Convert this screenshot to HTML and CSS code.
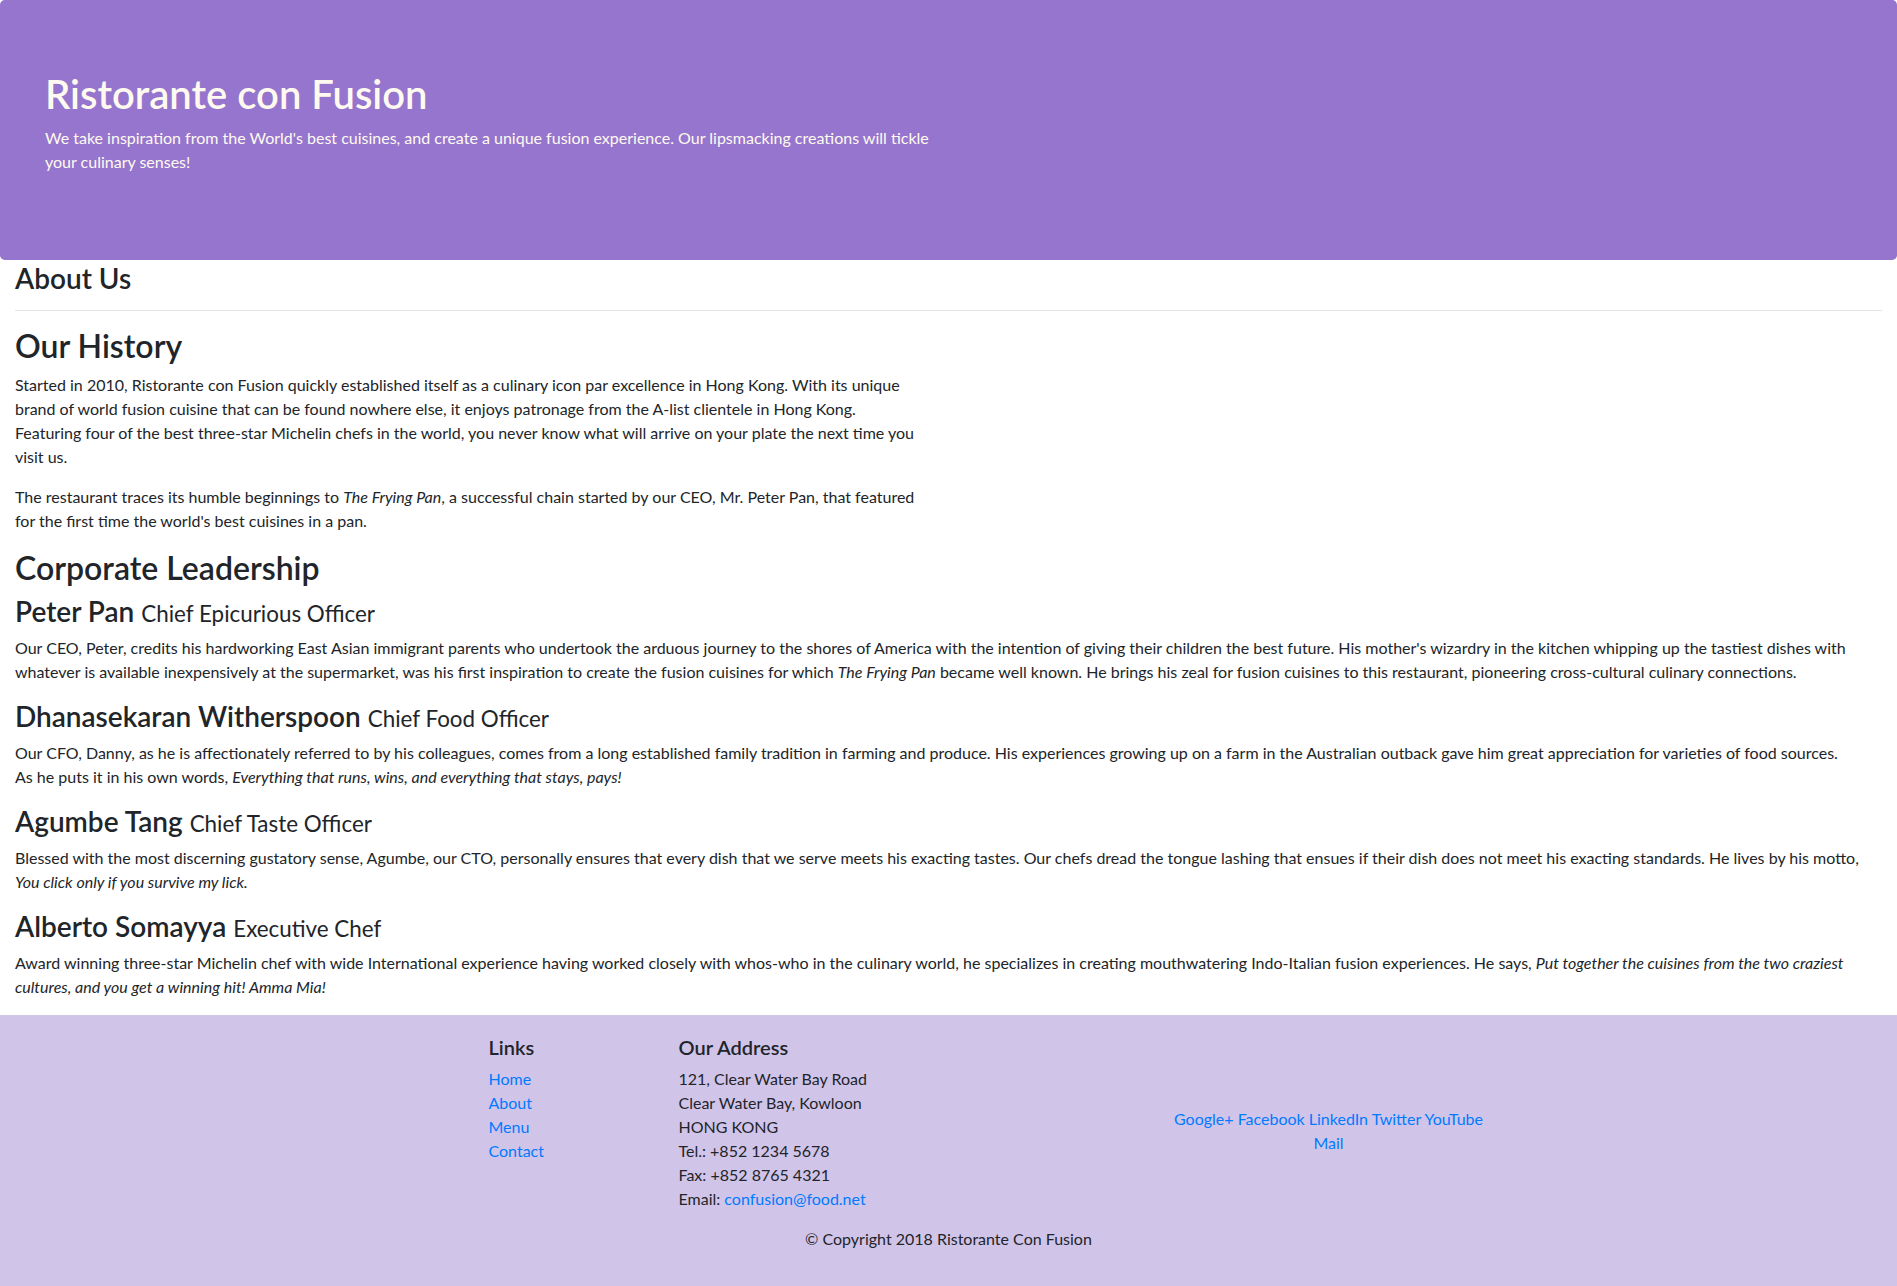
FILE: index.html
```html
<!DOCTYPE html>
<html lang="en">
<head>
<meta charset="utf-8">
<title>Ristorante con Fusion: About Us</title>
<link rel="stylesheet" href="styles.css">
</head>
<body>
<header class="jumbotron">
  <div class="jumbotron-inner">
    <div class="jumbotron-text">
      <h1>Ristorante con Fusion</h1>
      <p>We take inspiration from the World's best cuisines, and create a unique fusion experience. Our lipsmacking creations will tickle<br>your culinary senses!</p>
    </div>
  </div>
</header>

<main class="page">
  <section class="page-title">
    <h3>About Us</h3>
    <hr>
  </section>

  <section class="history">
    <h2>Our History</h2>
    <p>Started in 2010, Ristorante con Fusion quickly established itself as a culinary icon par excellence in Hong Kong. With its unique<br>brand of world fusion cuisine that can be found nowhere else, it enjoys patronage from the A-list clientele in Hong Kong.<br>Featuring four of the best three-star Michelin chefs in the world, you never know what will arrive on your plate the next time you<br>visit us.</p>
    <p>The restaurant traces its humble beginnings to <em>The Frying Pan</em>, a successful chain started by our CEO, Mr. Peter Pan, that featured<br>for the first time the world's best cuisines in a pan.</p>
  </section>

  <section class="leadership">
    <h2>Corporate Leadership</h2>
    <article class="leader">
      <h3 class="leader-name">Peter Pan <small>Chief Epicurious Officer</small></h3>
      <p>Our CEO, Peter, credits his hardworking East Asian immigrant parents who undertook the arduous journey to the shores of America with the intention of giving their children the best future. His mother's wizardry in the kitchen whipping up the tastiest dishes with<br>whatever is available inexpensively at the supermarket, was his first inspiration to create the fusion cuisines for which <em>The Frying Pan</em> became well known. He brings his zeal for fusion cuisines to this restaurant, pioneering cross-cultural culinary connections.</p>
    </article>
    <article class="leader">
      <h3 class="leader-name">Dhanasekaran Witherspoon <small>Chief Food Officer</small></h3>
      <p>Our CFO, Danny, as he is affectionately referred to by his colleagues, comes from a long established family tradition in farming and produce. His experiences growing up on a farm in the Australian outback gave him great appreciation for varieties of food sources.<br>As he puts it in his own words, <em>Everything that runs, wins, and everything that stays, pays!</em></p>
    </article>
    <article class="leader">
      <h3 class="leader-name">Agumbe Tang <small>Chief Taste Officer</small></h3>
      <p>Blessed with the most discerning gustatory sense, Agumbe, our CTO, personally ensures that every dish that we serve meets his exacting tastes. Our chefs dread the tongue lashing that ensues if their dish does not meet his exacting standards. He lives by his motto,<br><em>You click only if you survive my lick.</em></p>
    </article>
    <article class="leader">
      <h3 class="leader-name">Alberto Somayya <small>Executive Chef</small></h3>
      <p>Award winning three-star Michelin chef with wide International experience having worked closely with whos-who in the culinary world, he specializes in creating mouthwatering Indo-Italian fusion experiences. He says, <em>Put together the cuisines from the two craziest<br>cultures, and you get a winning hit! Amma Mia!</em></p>
    </article>
  </section>
</main>

<footer class="footer">
  <div class="footer-container">
    <div class="footer-row">
      <div class="footer-col footer-links">
        <h5>Links</h5>
        <ul class="link-list">
          <li><a href="#">Home</a></li>
          <li><a href="#">About</a></li>
          <li><a href="#">Menu</a></li>
          <li><a href="#">Contact</a></li>
        </ul>
      </div>
      <div class="footer-col footer-address">
        <h5>Our Address</h5>
        <address>
          121, Clear Water Bay Road<br>
          Clear Water Bay, Kowloon<br>
          HONG KONG<br>
          Tel.: +852 1234 5678<br>
          Fax: +852 8765 4321<br>
          Email: <a href="#">confusion@food.net</a>
        </address>
      </div>
      <div class="footer-col footer-social">
        <div class="social-links">
          <a href="#">Google+</a> <a href="#">Facebook</a> <a href="#">LinkedIn</a> <a href="#">Twitter</a> <a href="#">YouTube</a><br>
          <a href="#">Mail</a>
        </div>
      </div>
    </div>
    <div class="footer-row footer-bottom">
      <p>© Copyright 2018 Ristorante Con Fusion</p>
    </div>
  </div>
</footer>
</body>
</html>
```
FILE: styles.css
```css
* { box-sizing: border-box; }

html, body {
  margin: 0;
  padding: 0;
}

body {
  font-family: "Lato", "Liberation Sans", sans-serif;
  font-size: 16px;
  line-height: 1.5;
  color: #212529;
  background: #fff;
}

h1, h2, h3, h5 {
  margin: 0 0 8px;
  font-weight: 600;
  line-height: 1.2;
}

h1 { font-size: 40px; }
h2 { font-size: 32px; }
h3 { font-size: 28px; }
h5 { font-size: 20px; }

p { margin: 0 0 16px; }

a {
  color: #007bff;
  text-decoration: none;
}

/* Jumbotron */
.jumbotron {
  background: #9575CD;
  color: floralwhite;
  padding: 70px 30px;
  border-radius: 4.8px;
}

.jumbotron-inner {
  padding: 0 15px;
}

.jumbotron-text {
  width: calc(50% - 15px);
}

/* Main page */
.page {
  padding: 0 15px;
}

.page-title h3 {
  padding-top: 2px;
}

.page-title hr {
  margin: 14px 0 16px;
  border: 0;
  height: 0;
  border-top: 1px solid rgba(0, 0, 0, 0.1);
}

.history {
  width: calc(50% - 15px);
}

.leader-name {
  line-height: 33px;
}

.leader-name small {
  font-size: 80%;
  font-weight: 400;
  line-height: 1;
}

/* Footer */
.footer {
  background: #D1C4E9;
  padding: 20px 0;
}

.footer-container {
  width: 1140px;
  margin: 0 auto;
  padding: 0 15px;
}

.footer-row {
  display: flex;
  margin: 0 -15px;
}

.footer-col {
  padding: 0 15px;
}

.footer-links {
  width: 190px;
  margin-left: 95px;
}

.link-list {
  list-style: none;
  margin: 0 0 16px;
  padding: 0;
}

.footer-address {
  width: 475px;
}

.footer-address address {
  font-style: normal;
  margin: 0 0 16px;
}

.footer-social {
  width: 380px;
  align-self: center;
  text-align: center;
}

.footer-bottom {
  justify-content: center;
}
```
